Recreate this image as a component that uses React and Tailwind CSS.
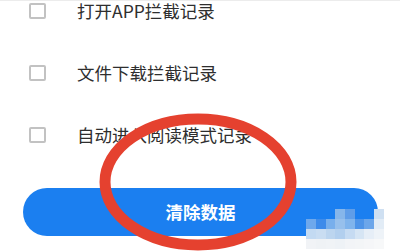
import React from 'react';

const rows = ['打开APP拦截记录', '文件下载拦截记录', '自动进入阅读模式记录'];

// mosaic watermark blocks: [left, top, color]
const mosaic = [
  [335, 208, '#86b6ea'], [345, 208, '#5f9de8'], [374, 208, '#cfe0f2'],
  [306, 218, '#6ea8ec'], [316, 218, '#3e8bea'], [326, 218, '#78afec'], [335, 218, '#97c0ec'],
  [345, 218, '#80b4ec'], [355, 218, '#4e94e8'], [364, 218, '#6ca6ea'], [374, 218, '#e2ecf6'],
  [306, 228, '#c3daf2'], [316, 228, '#c9ddf2'], [326, 228, '#bcd5ef'], [335, 228, '#b2cfee'],
  [345, 228, '#c6dbf2'], [355, 228, '#d6e5f4'], [364, 228, '#e6eef7'], [374, 228, '#eef3f8'],
  [306, 238, '#f1f3f6'], [316, 238, '#eff2f5'], [326, 238, '#f0f3f6'], [335, 238, '#eef2f6'],
  [345, 238, '#f2f4f7'], [355, 238, '#f3f5f7'], [364, 238, '#f5f6f8'], [374, 238, '#f7f8f9'],
];

export default function App() {
  return (
    <div
      className="relative w-[400px] h-[251px] overflow-hidden bg-white border-t border-[#ececec]"
      style={{ fontFamily: '"Noto Sans CJK SC", "Noto Sans", sans-serif' }}
    >
      <div className="flex flex-col mt-[-21px]">
        {rows.map((label) => (
          <div key={label} className="flex items-center h-[62px] pl-[29px]">
            <div className="w-[17px] h-[16px] rounded-[2px] border-2 border-[#c2c2c2]" />
            <span className="ml-[31px] text-[17.5px] leading-none text-[#2e2e2e]">{label}</span>
          </div>
        ))}
      </div>

      <button className="ml-[23px] mt-[22px] w-[355px] h-[48px] rounded-full bg-[#1b7ff0] text-white text-[17.5px] font-semibold flex items-center justify-center">
        清除数据
      </button>

      {mosaic.map(([x, y, c], i) => (
        <div
          key={i}
          className="absolute w-[10px] h-[10px]"
          style={{ left: x, top: y, backgroundColor: c }}
        />
      ))}

      <svg className="absolute left-0 top-0 pointer-events-none" width="400" height="251">
        <ellipse cx="198" cy="181" rx="93" ry="63" fill="none" stroke="#e5412f" strokeWidth="11" />
      </svg>
    </div>
  );
}
